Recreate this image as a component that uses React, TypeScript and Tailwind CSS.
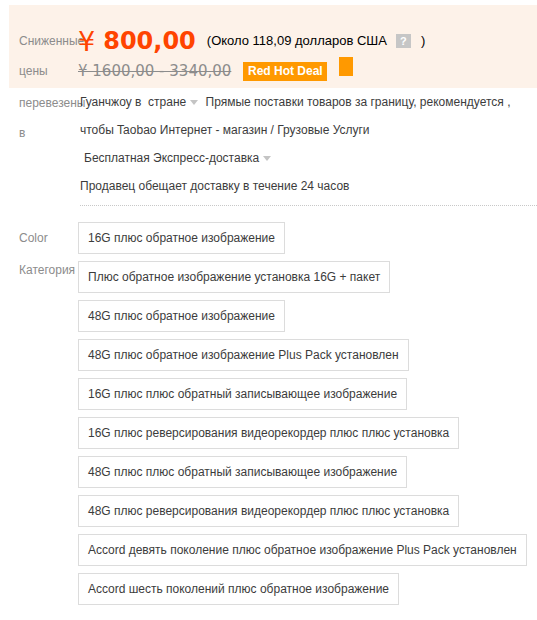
const sans = { fontFamily: '"Liberation Sans", Arial, sans-serif' };

const options = [
  "16G плюс обратное изображение",
  "Плюс обратное изображение установка 16G + пакет",
  "48G плюс обратное изображение",
  "48G плюс обратное изображение Plus Pack установлен",
  "16G плюс плюс обратный записывающее изображение",
  "16G плюс реверсирования видеорекордер плюс плюс установка",
  "48G плюс плюс обратный записывающее изображение",
  "48G плюс реверсирования видеорекордер плюс плюс установка",
  "Accord девять поколение плюс обратное изображение Plus Pack установлен",
  "Accord шесть поколений плюс обратное изображение",
];

function Caret() {
  return (
    <svg width="8" height="5" viewBox="0 0 8 5" className="inline-block mx-[4px] align-middle">
      <path d="M0 0h8L4 5z" fill="#c4c4c4" />
    </svg>
  );
}

export default function App() {
  return (
    <div className="w-[537px] h-[620px] bg-white pt-[5px] text-[12px] text-[#3c3c3c]" style={sans}>
      {/* price panel */}
      <div className="ml-[9px] bg-[#fdf2e9] pl-[10px] pt-[21px] pb-[2px] flex">
        <div className="w-[59px] shrink-0 leading-[30px] text-[#8c8c8c]">Сниженные цены</div>
        <div className="flex flex-col">
          <div className="h-[30px] flex items-center whitespace-nowrap">
            <span className="text-[#ff4400] text-[27px] leading-none" style={{ fontFamily: '"DejaVu Sans", sans-serif' }}>
              ¥
            </span>
            <span
              className="text-[#ff4400] text-[24px] font-bold leading-none ml-[8px]"
              style={{ fontFamily: '"DejaVu Sans", sans-serif' }}
            >
              800,00
            </span>
            <span className="ml-[11px] text-[13px] text-black">(Около 118,09 долларов США</span>
            <span className="ml-[9px] w-[15px] h-[14px] bg-[#c6c6c6] text-white text-[11px] font-bold flex items-center justify-center">
              ?
            </span>
            <span className="ml-[10px] text-[13px] text-black">)</span>
          </div>
          <div className="h-[30px] flex items-center whitespace-nowrap">
            <span
              className="text-[15px] text-[#8c8c8c] line-through"
              style={{ fontFamily: '"DejaVu Sans", sans-serif' }}
            >
              ¥ 1600,00 - 3340,00
            </span>
            <span className="ml-[12px] h-[19px] w-[84px] bg-[#ff9900] text-white text-[12px] font-bold flex items-center justify-center">
              Red Hot Deal
            </span>
            <span className="ml-[12px] w-[14px] h-[19px] bg-[#ff9900] -mt-[10px]" />
          </div>
        </div>
      </div>

      {/* delivery */}
      <div className="pl-[19px] flex">
        <div className="w-[61px] shrink-0 leading-[30px] text-[#8c8c8c]">перевезены в</div>
        <div className="flex-1 leading-[28px] pb-[5px] border-b border-dotted border-[#c8c8c8] whitespace-nowrap">
          <div>
            Гуанчжоу в&nbsp; стране
            <Caret />
            &nbsp;Прямые поставки товаров за границу, рекомендуется ,
          </div>
          <div>чтобы Taobao Интернет - магазин / Грузовые Услуги</div>
          <div className="pl-[4px]">
            Бесплатная Экспресс-доставка
            <Caret />
          </div>
          <div>Продавец обещает доставку в течение 24 часов</div>
        </div>
      </div>

      {/* options */}
      <div className="pl-[19px] pt-[16px] flex">
        <div className="w-[59px] shrink-0 leading-[32px] text-[#8c8c8c]">Color Категория</div>
        <div className="flex flex-col items-start gap-[7px]">
          {options.map((o) => (
            <div
              key={o}
              className="h-[32px] px-[9px] border border-[#dcdcdc] flex items-center whitespace-nowrap"
            >
              {o}
            </div>
          ))}
        </div>
      </div>
    </div>
  );
}
